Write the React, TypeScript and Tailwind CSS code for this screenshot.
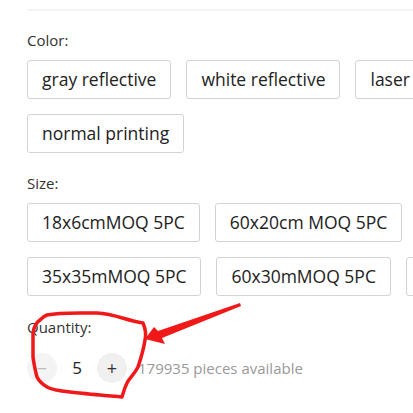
const colors = ["gray reflective", "white reflective", "laser reflective", "normal printing"];
const sizes = ["18x6cmMOQ 5PC", "60x20cm MOQ 5PC", "35x35mMOQ 5PC", "60x30mMOQ 5PC", "60x40mMOQ 5PC"];

function Chip({ label }: { label: string }) {
  return (
    <div className="h-[39px] px-[14px] flex items-center border border-[#d3d3d3] rounded-[3px] text-[17.5px] text-[#222] whitespace-nowrap bg-white">
      {label}
    </div>
  );
}

export default function App() {
  return (
    <div
      className="relative w-[413px] h-[413px] overflow-hidden bg-white"
      style={{ fontFamily: '"Open Sans", "Liberation Sans", sans-serif' }}
    >
      <div className="ml-[27px] mt-[9px] h-[2px] bg-[#f4f4f4]" />

      <div className="pl-[27px] w-[585px]">
        <p className="mt-[19px] text-[15px] leading-[20px] text-[#333]">Color:</p>
        <div className="mt-[10px] flex flex-wrap gap-x-[15px] gap-y-[15px]">
          {colors.map((c) => (
            <Chip key={c} label={c} />
          ))}
        </div>

        <p className="mt-[20px] text-[15px] leading-[20px] text-[#333]">Size:</p>
        <div className="mt-[10px] flex flex-wrap gap-x-[15px] gap-y-[15px]">
          {sizes.map((s) => (
            <Chip key={s} label={s} />
          ))}
        </div>

        <p className="mt-[21px] text-[15px] leading-[20px] text-[#333]">Quantity:</p>
        <div className="mt-[16px] flex items-center">
          <button className="w-[30px] h-[30px] rounded-full bg-[#f4f4f4] flex items-center justify-center text-[#bbb] text-[18px]">
            −
          </button>
          <span className="w-[40px] text-center text-[17px] text-[#222]">5</span>
          <button className="w-[30px] h-[30px] rounded-full bg-[#f0f0f0] flex items-center justify-center text-[#333] text-[18px]">
            +
          </button>
          <span className="ml-[11px] text-[15px] text-[#999]">179935 pieces available</span>
        </div>
      </div>

      {/* hand-drawn red annotation */}
      <svg className="absolute inset-0 pointer-events-none" width="413" height="413" viewBox="0 0 413 413">
        <path
          d="M47 315 C60 312 80 313 97 313 C115 314 125 320 143 323 C146 330 146 336 145 340 C144 347 142 355 138 367 C134 375 129 378 127 383 C124 389 123 394 122 397 C115 396 108 396 100 395 C88 394 80 393 70 392 C60 391 52 390 47 387 C42 384 39 381 37 377 C35 370 34 364 33 357 C33 348 33 340 33 333 C34 326 37 322 40 320 C42 318 44 316 47 315 Z"
          fill="none"
          stroke="#f01818"
          strokeWidth="3.5"
          strokeLinejoin="round"
          strokeLinecap="round"
        />
        <path d="M145 339 L154 327 L158 331 L240 303 L241 306 L162 338 L165 344 Z" fill="#f01818" />
      </svg>
    </div>
  );
}
